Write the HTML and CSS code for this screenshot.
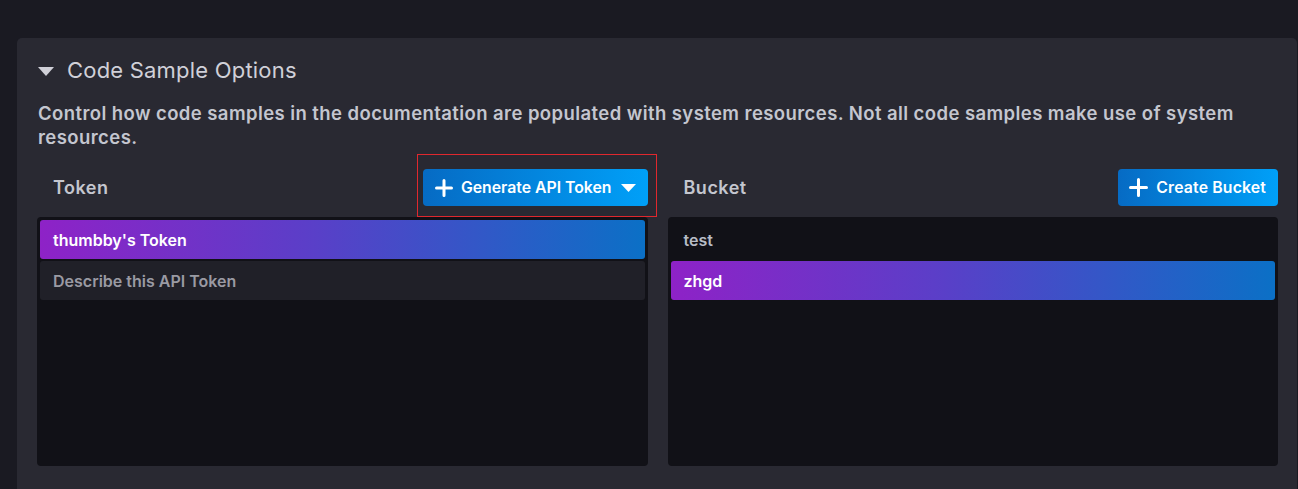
FILE: index.html
```html
<!DOCTYPE html>
<html>
<head>
<meta charset="utf-8">
<link rel="stylesheet" href="styles.css">
</head>
<body>
<div class="page">
  <section class="panel">
    <div class="panel-title">
      <span class="caret-down"></span>
      <span>Code Sample Options</span>
    </div>
    <p class="desc">Control how code samples in the documentation are populated with system resources. Not all code samples make use of system resources.</p>
    <div class="columns">
      <div class="col">
        <div class="col-head">
          <span class="col-label">Token</span>
          <div class="btn-wrap">
            <button class="btn">
              <svg class="plus" width="18" height="18" viewBox="0 0 18 18"><path d="M9 1.5v15M1.5 9h15" stroke="#fff" stroke-width="3" stroke-linecap="round"/></svg>
              <span>Generate API Token</span>
              <svg class="btn-caret" width="15" height="8" viewBox="0 0 15 8"><path d="M0 0h15L7.5 8z" fill="#fff"/></svg>
            </button>
            <span class="highlight"></span>
          </div>
        </div>
        <div class="list">
          <div class="item active">thumbby's Token</div>
          <div class="item muted">Describe this API Token</div>
        </div>
      </div>
      <div class="col">
        <div class="col-head">
          <span class="col-label">Bucket</span>
          <button class="btn wide">
            <svg class="plus" width="19" height="19" viewBox="0 0 19 19"><path d="M9.5 1.5v16M1.5 9.5h16" stroke="#fff" stroke-width="3" stroke-linecap="round"/></svg>
            <span>Create Bucket</span>
          </button>
        </div>
        <div class="list">
          <div class="item plain">test</div>
          <div class="item active">zhgd</div>
        </div>
      </div>
    </div>
  </section>
</div>
</body>
</html>
```
FILE: styles.css
```css
html, body {
  margin: 0;
  height: 100%;
  background: #1a1a22;
  overflow: hidden;
}
body {
  font-family: Inter, "Noto Sans", sans-serif;
  color: #c8c8d0;
}
.page {
  padding: 38px 1px 0 17px;
}
.panel {
  background: #292932;
  border-radius: 5px 5px 0 0;
  padding: 18px 19px 30px 20px;
  min-height: 460px;
}
.panel-title {
  display: flex;
  align-items: center;
  height: 28px;
  font-size: 22px;
  letter-spacing: 0.2px;
  font-weight: 400;
  color: #d0d0d8;
  padding-left: 1px;
}
.caret-down {
  width: 0;
  height: 0;
  border-left: 8px solid transparent;
  border-right: 8px solid transparent;
  border-top: 9px solid #d0d0d8;
  margin-right: 13px;
  margin-top: 2px;
}
.desc {
  margin: 17px 0 0 1px;
  font-size: 18.5px;
  line-height: 24px;
  font-weight: 600;
  color: #c4c6cf;
  letter-spacing: 0.42px;
}
.columns {
  display: grid;
  grid-template-columns: 1fr 1fr;
  gap: 20px;
  margin-top: 20px;
}
.col-head {
  display: flex;
  align-items: center;
  justify-content: space-between;
  height: 37px;
  margin-bottom: 11px;
}
.col-label {
  padding-left: 16px;
  font-size: 18px;
  letter-spacing: 0.5px;
  font-weight: 600;
  color: #c4c6cf;
}
.btn-wrap {
  position: relative;
}
.highlight {
  position: absolute;
  left: -6px;
  right: -9px;
  top: -15px;
  bottom: -11px;
  border: 1px solid #e0282e;
  pointer-events: none;
}
.btn {
  display: flex;
  align-items: center;
  gap: 8px;
  height: 37px;
  padding: 0 12px 0 12px;
  border: 0;
  border-radius: 4px;
  background: linear-gradient(90deg, #066bc4 0%, #00a0f8 100%);
  color: #fff;
  font-family: inherit;
  font-size: 15.8px;
  font-weight: 600;
}
.btn.wide {
  padding: 0 12px 0 11px;
  letter-spacing: 0.15px;
}
.btn-caret {
  margin-left: 1px;
}
.list {
  height: 243px;
  background: #111117;
  border-radius: 4px;
  padding: 3px;
  display: flex;
  flex-direction: column;
  gap: 2px;
}
.item {
  height: 39px;
  display: flex;
  align-items: center;
  padding-left: 13px;
  border-radius: 3px;
  font-size: 16px;
  font-weight: 600;
}
.item.active {
  background: linear-gradient(90deg, #8e22c7 0%, #5a3fc8 45%, #0b70c6 100%);
  color: #fff;
}
.item.muted {
  background: #202028;
  color: #9a9aa3;
}
.item.plain {
  color: #b7bcc6;
}
```
